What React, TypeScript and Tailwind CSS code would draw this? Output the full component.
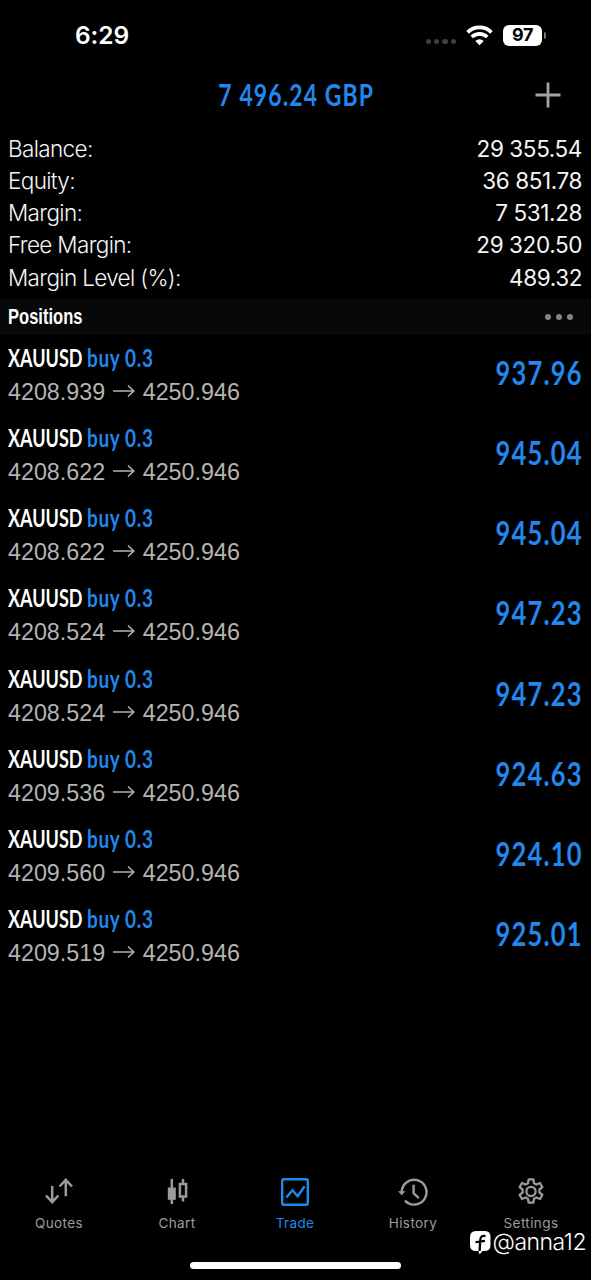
import type { ReactNode } from 'react'

interface Position {
  symbol: string
  side: string
  open: string
  current: string
  profit: string
}

const summary = [
  { label: 'Balance:', value: '29 355.54' },
  { label: 'Equity:', value: '36 851.78' },
  { label: 'Margin:', value: '7 531.28' },
  { label: 'Free Margin:', value: '29 320.50' },
  { label: 'Margin Level (%):', value: '489.32' },
]

const positions: Position[] = [
  { symbol: 'XAUUSD', side: 'buy 0.3', open: '4208.939', current: '4250.946', profit: '937.96' },
  { symbol: 'XAUUSD', side: 'buy 0.3', open: '4208.622', current: '4250.946', profit: '945.04' },
  { symbol: 'XAUUSD', side: 'buy 0.3', open: '4208.622', current: '4250.946', profit: '945.04' },
  { symbol: 'XAUUSD', side: 'buy 0.3', open: '4208.524', current: '4250.946', profit: '947.23' },
  { symbol: 'XAUUSD', side: 'buy 0.3', open: '4208.524', current: '4250.946', profit: '947.23' },
  { symbol: 'XAUUSD', side: 'buy 0.3', open: '4209.536', current: '4250.946', profit: '924.63' },
  { symbol: 'XAUUSD', side: 'buy 0.3', open: '4209.560', current: '4250.946', profit: '924.10' },
  { symbol: 'XAUUSD', side: 'buy 0.3', open: '4209.519', current: '4250.946', profit: '925.01' },
]

function StatusBar() {
  return (
    <div className="flex h-[70px] shrink-0 items-center justify-between pl-[75px] pr-[45px] text-white">
      <span className="mt-px text-[24.5px] font-semibold leading-none tracking-[-0.1px]">6:29</span>
      <div className="flex items-center">
        <div className="mt-[13px] flex gap-[3px]">
          {[0, 1, 2, 3].map((i) => (
            <span key={i} className="size-[5.3px] rounded-full bg-[#3f3f3f]" />
          ))}
        </div>
        <svg className="ml-[10px]" width="27" height="21" viewBox="0 0 27 21" fill="none" stroke="#fff">
          <path d="M1.6 7.3a17 17 0 0 1 23.8 0" strokeWidth="3.8" />
          <path d="M5.8 12a11 11 0 0 1 15.4 0" strokeWidth="3.6" />
          <path d="M13.5 20.2l-4.2-4.3a6 6 0 0 1 8.4 0z" fill="#fff" stroke="none" />
        </svg>
        <div className="ml-[10px] flex h-[21px] w-[39px] items-center justify-center rounded-[6px] bg-white text-[18px] font-bold leading-none tracking-[-0.5px] text-black">
          97
        </div>
        <span className="ml-[2px] h-[7px] w-[2px] rounded-r-full bg-[#777]" />
      </div>
    </div>
  )
}

function Header() {
  return (
    <div className="flex h-[62px] shrink-0 items-center">
      <span className="w-[57px]" />
      <h1 className="flex flex-1 justify-center pb-[15px] font-[Lato] text-[31px] font-bold leading-[36px] text-[#2188ee]">
        <span className="inline-block scale-x-[0.74] whitespace-nowrap tracking-[1.5px]">7 496.24 GBP</span>
      </h1>
      <button type="button" className="mb-[12px] mr-[30px] flex w-[26px] justify-center" aria-label="New order">
        <svg width="26" height="26" viewBox="0 0 26 26" stroke="#a3a3a3" strokeWidth="2.8">
          <path d="M13 0.5v25M0.5 13h25" />
        </svg>
      </button>
    </div>
  )
}

function Summary() {
  return (
    <dl className="flex h-[167px] shrink-0 flex-col pl-[8px] pr-[9px] pt-[0.6px] text-[22.5px] leading-[32.3px] text-[#f5f5f5]">
      {summary.map((row) => (
        <div key={row.label} className="flex justify-between">
          <dt className="font-[330] tracking-[-0.65px]">{row.label}</dt>
          <dd className="font-[440] tracking-[-0.4px]">{row.value}</dd>
        </div>
      ))}
    </dl>
  )
}

function PositionsBar() {
  return (
    <div className="flex h-[36px] shrink-0 items-center justify-between bg-[#080808] pl-[8px] pr-[18px]">
      <h2 className="mt-[2px] origin-left scale-x-[0.77] font-['Liberation_Sans'] text-[21.5px] font-bold leading-none text-white">
        Positions
      </h2>
      <div className="flex gap-[5.5px]">
        {[0, 1, 2].map((i) => (
          <span key={i} className="size-[5.6px] rounded-full bg-[#858585]" />
        ))}
      </div>
    </div>
  )
}

function PositionRow({ position }: { position: Position }) {
  return (
    <li className="flex h-[80.15px] justify-between pl-[8px] pr-[8px]">
      <div>
        <div className="flex h-[33px] items-center pt-[12px] font-[Lato] text-[24px] leading-[33px]">
          <span className="w-[79px]">
            <span className="inline-block origin-left scale-x-[0.75] font-bold text-white">{position.symbol}</span>
          </span>
          <span className="inline-block origin-left scale-x-[0.79] whitespace-nowrap font-bold tracking-[0.8px] text-[#2188ee]">
            {position.side}
          </span>
        </div>
        <div className="mt-[8px] flex items-center font-['Liberation_Sans'] text-[23.3px] leading-[33px] text-[#b4b4b4]">
          <span>{position.open}</span>
          <svg className="-mt-[3px] ml-[8px] mr-[7.5px]" width="22" height="14" viewBox="0 0 22 14" fill="none" stroke="#b4b4b4" strokeWidth="1.5">
            <path d="M0 7h20.5M15 1.5L20.8 7 15 12.5" />
          </svg>
          <span>{position.current}</span>
        </div>
      </div>
      <span className="mt-[20px] origin-right scale-x-[0.81] font-[Lato] text-[31.5px] font-bold leading-[36px] tracking-[1.5px] text-[#2188ee]">
        {position.profit}
      </span>
    </li>
  )
}

function QuotesIcon() {
  return (
    <svg width="28" height="28" viewBox="0 0 28 28" fill="none" stroke="currentColor" strokeWidth="2.5">
      <path d="M7.2 8v16M1 17.5l6.2 6.7 6.2-6.7M20.8 18.2V2M14.6 8.5l6.2-6.7L27 8.5" />
    </svg>
  )
}

function ChartIcon() {
  return (
    <svg width="28" height="28" viewBox="0 0 28 28" fill="none" stroke="currentColor" strokeWidth="2.5">
      <path d="M8.8 1v25M20 1v5M20 19v4.5" />
      <path d="M4.8 9.5h8v12.3h-8z" fill="currentColor" stroke="none" />
      <path d="M16.9 6h6.2v12.5h-6.2z" />
    </svg>
  )
}

function TradeIcon() {
  return (
    <svg width="28" height="28" viewBox="0 0 28 28" fill="none" stroke="currentColor" strokeWidth="2.4">
      <rect x="1.2" y="1.2" width="25.6" height="25.6" rx="1.5" />
      <path d="M5.3 19.5l6.2-7.2 5.2 6L23.6 8.3" />
    </svg>
  )
}

function HistoryIcon() {
  return (
    <svg width="30" height="28" viewBox="0 0 30 28" fill="none" stroke="currentColor" strokeWidth="2.4">
      <path d="M3.7 14.5A12.4 12.4 0 1 1 7 22.6" />
      <path d="M0 13.3h7.4l-3.7 4z" fill="currentColor" stroke="none" />
      <path d="M15.6 6.8v8.5l5.2 4.8" />
    </svg>
  )
}

function SettingsIcon() {
  return (
    <svg width="28" height="28" viewBox="0 0 28 28" fill="none" stroke="currentColor" strokeWidth="2.3" strokeLinejoin="round">
      <path d="M11.6 1.4h4.8l.6 3.8 2.4 1.3 3.6-1.5 2.4 4.2-3 2.3v3l3 2.3-2.4 4.2-3.6-1.5-2.4 1.3-.6 3.8h-4.8l-.6-3.8-2.4-1.3L5 21l-2.4-4.2 3-2.3v-3l-3-2.3L5 5l3.6 1.5L11 5.2z" />
      <circle cx="14" cy="13.4" r="4.6" />
    </svg>
  )
}

function TabItem({ label, active, children }: { label: string; active?: boolean; children: ReactNode }) {
  return (
    <button
      type="button"
      className={'flex flex-1 flex-col items-center ' + (active ? 'text-[#2188ee]' : 'text-[#9b9b9b]')}
    >
      {children}
      <span className="mt-[8px] text-[13.5px] leading-[18px] tracking-[0.4px]">{label}</span>
    </button>
  )
}

function TabBar() {
  return (
    <nav className="mr-px flex h-[84.5px] shrink-0">
      <TabItem label="Quotes">
        <QuotesIcon />
      </TabItem>
      <TabItem label="Chart">
        <ChartIcon />
      </TabItem>
      <TabItem label="Trade" active>
        <TradeIcon />
      </TabItem>
      <TabItem label="History">
        <HistoryIcon />
      </TabItem>
      <TabItem label="Settings">
        <SettingsIcon />
      </TabItem>
    </nav>
  )
}

function Watermark() {
  return (
    <div className="absolute bottom-[25px] right-[5px] flex items-center text-white">
      <svg className="mt-px" width="21" height="24" viewBox="0 0 21 24">
        <path d="M6 0h9q5.5 0 5.5 6v8q0 6-6 6h-2l-3 3.5-1-3.5H6q-6 0-6-6V6q0-6 6-6z" fill="#fff" />
        <path d="M15.5 5.2c-3.2-1-5 .4-5.2 3.5L9.6 20M5.5 11.2l9.5-1.4" fill="none" stroke="#000" strokeWidth="2.3" />
      </svg>
      <span className="ml-[2px] text-[23px] font-[330] leading-[21px] tracking-[-0.5px]">@anna12</span>
    </div>
  )
}

export default function App() {
  return (
    <div className="relative flex h-[1280px] w-[591px] flex-col overflow-hidden bg-black font-[Inter,sans-serif]">
      <StatusBar />
      <Header />
      <Summary />
      <PositionsBar />
      <ul className="flex-1">
        {positions.map((position, i) => (
          <PositionRow key={i} position={position} />
        ))}
      </ul>
      <TabBar />
      <div className="mb-[11px] h-[7px] w-[211px] shrink-0 self-center rounded-full bg-white" />
      <Watermark />
    </div>
  )
}
